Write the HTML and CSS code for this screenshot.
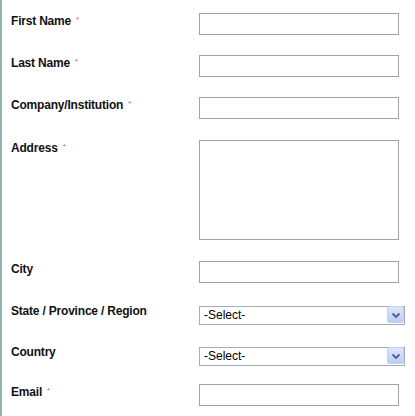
FILE: index.html
```html
<!DOCTYPE html>
<html>
<head>
<meta charset="utf-8">
<link rel="stylesheet" href="styles.css">
</head>
<body>
<div class="page">
  <form class="form">
    <div class="row r1">
      <label class="label">First Name<span class="req">*</span></label>
      <input class="text" type="text">
    </div>
    <div class="row r2">
      <label class="label">Last Name<span class="req">*</span></label>
      <input class="text" type="text">
    </div>
    <div class="row r3">
      <label class="label">Company/Institution<span class="req">*</span></label>
      <input class="text" type="text">
    </div>
    <div class="row r4">
      <label class="label">Address<span class="req">*</span></label>
      <textarea class="area"></textarea>
    </div>
    <div class="row r5">
      <label class="label">City</label>
      <input class="text" type="text">
    </div>
    <div class="row r6">
      <label class="label">State / Province / Region</label>
      <div class="select">
        <select class="sel"><option>-Select-</option></select>
        <span class="arrow"><svg width="14" height="14" viewBox="0 0 14 14"><path d="M3.5 5.5 L7 9 L10.5 5.5" fill="none" stroke="#4a5f8c" stroke-width="1.8"/></svg></span>
      </div>
    </div>
    <div class="row r7">
      <label class="label">Country</label>
      <div class="select">
        <select class="sel"><option>-Select-</option></select>
        <span class="arrow"><svg width="14" height="14" viewBox="0 0 14 14"><path d="M3.5 5.5 L7 9 L10.5 5.5" fill="none" stroke="#4a5f8c" stroke-width="1.8"/></svg></span>
      </div>
    </div>
    <div class="row r8">
      <label class="label">Email<span class="req">*</span></label>
      <input class="text" type="text">
    </div>
  </form>
</div>
</body>
</html>
```
FILE: styles.css
```css
html, body {
  margin: 0;
  padding: 0;
  background: #ffffff;
}
body {
  font-family: "Liberation Sans", Arial, sans-serif;
  color: #111111;
}
.page {
  border-left: 2px solid #93b3b1;
  min-height: 416px;
  box-sizing: border-box;
  padding: 13px 0 0 9px;
}
.form {
  display: flex;
  flex-direction: column;
  margin: 0;
}
.row {
  display: grid;
  grid-template-columns: 188px auto;
  align-items: start;
}
.r1, .r2 { height: 42px; }
.r3 { height: 43px; }
.r4 { height: 121px; }
.r5 { height: 44px; }
.r6 { height: 41px; }
.r7 { height: 38px; }
.r8 { height: 32px; }
.label {
  font-size: 12px;
  font-weight: bold;
  letter-spacing: -0.2px;
  line-height: 12px;
  padding-top: 2px;
  white-space: nowrap;
}
.r6 .label,
.r7 .label {
  padding-top: 0;
}
.req {
  color: #d85a5a;
  font-size: 8px;
  font-weight: normal;
  vertical-align: top;
  margin-left: 5px;
  position: relative;
  top: -1px;
}
.text {
  width: 200px;
  height: 22px;
  box-sizing: border-box;
  border: 1px solid #a3a3a3;
  margin: 0;
  padding: 2px;
  background: #fff;
}
.area {
  width: 200px;
  height: 100px;
  box-sizing: border-box;
  border: 1px solid #a3a3a3;
  margin: 0;
  padding: 2px;
  resize: none;
  background: #fff;
}
.select {
  position: relative;
  width: 206px;
  height: 19px;
}
.sel {
  appearance: none;
  -webkit-appearance: none;
  width: 206px;
  height: 19px;
  box-sizing: border-box;
  border: 1px solid #a5acb2;
  border-radius: 0;
  background: #fff;
  margin: 0;
  padding: 0 0 0 4px;
  font-family: "Liberation Sans", Arial, sans-serif;
  font-size: 12px;
  color: #000;
}
.arrow {
  position: absolute;
  top: 1px;
  right: 1px;
  width: 17px;
  height: 17px;
  box-sizing: border-box;
  border: 1px solid #c3d1f2;
  border-radius: 2px;
  background: linear-gradient(#dde6fb, #bccdf4);
  display: flex;
  align-items: center;
  justify-content: center;
  pointer-events: none;
}
.arrow svg {
  display: block;
}
```
